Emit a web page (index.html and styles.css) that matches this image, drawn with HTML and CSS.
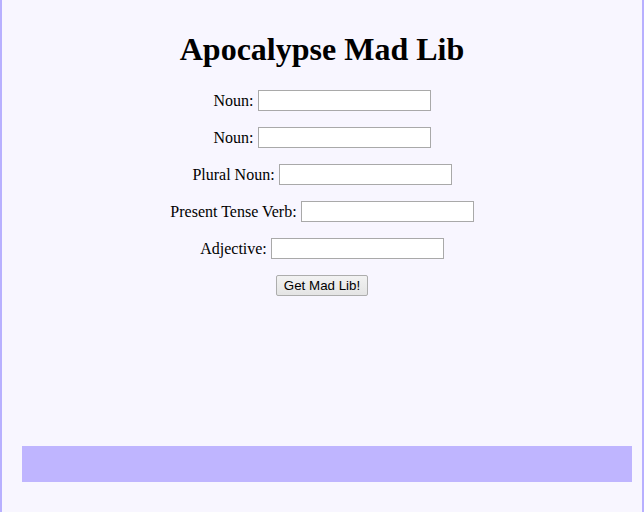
FILE: index.html
```html
<!DOCTYPE html>
<html lang="en">
<head>
<meta charset="utf-8">
<title>Apocalypse Mad Lib</title>
<link rel="stylesheet" href="styles.css">
</head>
<body>
<div class="page">
  <h1 class="title">Apocalypse Mad Lib</h1>
  <form class="form">
    <div class="row"><label for="n1">Noun:</label><input id="n1" class="field" type="text"></div>
    <div class="row"><label for="n2">Noun:</label><input id="n2" class="field" type="text"></div>
    <div class="row"><label for="pn">Plural Noun:</label><input id="pn" class="field" type="text"></div>
    <div class="row"><label for="v">Present Tense Verb:</label><input id="v" class="field" type="text"></div>
    <div class="row"><label for="adj">Adjective:</label><input id="adj" class="field" type="text"></div>
    <div class="row"><button type="button" class="btn">Get Mad Lib!</button></div>
  </form>
  <div class="footer"></div>
</div>
</body>
</html>
```
FILE: styles.css
```css
html, body {
  margin: 0;
  padding: 0;
  background: #f8f6ff;
}
.page {
  box-sizing: border-box;
  min-height: 512px;
  border-left: 2px solid #b8b0ff;
  border-right: 2px solid #b8b0ff;
  padding-top: 31px;
  display: flex;
  flex-direction: column;
  font-family: "Liberation Serif", "Times New Roman", serif;
  font-size: 16px;
  color: #000;
}
.title {
  margin: 0;
  font-size: 32px;
  font-weight: 700;
  line-height: 37px;
  text-align: center;
}
.form {
  margin-top: 22px;
  display: flex;
  flex-direction: column;
  gap: 16px;
}
.row {
  display: flex;
  justify-content: center;
  align-items: center;
  gap: 4px;
  height: 21px;
}
.field {
  box-sizing: border-box;
  width: 173px;
  height: 21px;
  margin: 0;
  padding: 1px 2px;
  border: 1px solid #a9a9a9;
  background: #fff;
  font-family: "Liberation Sans", Arial, sans-serif;
  font-size: 13.33px;
}
.btn {
  box-sizing: border-box;
  width: 92px;
  height: 21px;
  margin: 0;
  padding: 0 6px;
  border: 1px solid #adadad;
  border-radius: 2px;
  background: linear-gradient(#f2f2f2, #e4e4e4);
  font-family: "Liberation Sans", Arial, sans-serif;
  font-size: 13.33px;
  color: #000;
}
.footer {
  margin: auto 10px 30px 20px;
  height: 36px;
  background: #bfb5ff;
}
```
